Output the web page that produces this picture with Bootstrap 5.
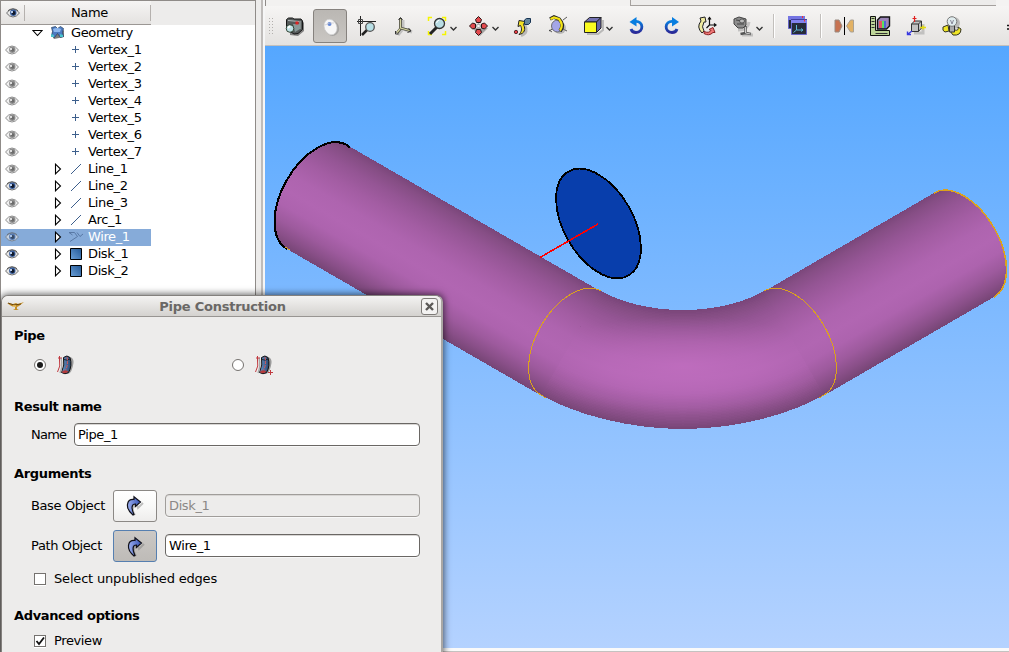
<!DOCTYPE html>
<html lang="en">
<head>
<meta charset="utf-8">
<title>Pipe Construction</title>
<link href="https://cdn.jsdelivr.net/npm/bootstrap@5.3.0/dist/css/bootstrap.min.css" rel="stylesheet">
<style>
body{font-family:"DejaVu Sans",sans-serif;font-size:13px;line-height:17px;letter-spacing:-.38px;color:#000;background:#edeceb;height:652px;width:1009px;overflow:hidden}
svg{display:block;flex:none}
.side{width:256px;height:652px;border:1px solid #8f8b88;border-bottom:0;background:#fff}
.head-row{height:24px;background:#edeceb}
.head-cell{height:24px;background:linear-gradient(#f6f5f4,#e4e2e0);border-bottom:1px solid #9b9794;position:relative}
.head-cell::after{content:"";width:1px;height:16px;background:#b5b1ae;position:absolute;right:0;top:4px}
.tree-row{height:17px;width:150px;padding-bottom:2px}
.tree-row.picked{background:#86abd9;color:#fff}
.split{width:9px;background:#edeceb;border-right:3px solid #f6f6f6;position:relative}
.split::after{content:"";position:absolute;right:-1px;top:0;bottom:0;width:2px;background:#bfbcba}
.tabs-strip{height:6px}
.strip-a{width:365px;background:#f2f1f0;border-left:1px solid #8f8b88}
.strip-b{width:366px;background:#edeceb;border-left:1px solid #a5a19e;border-bottom:1px solid #a5a19e}
.strip-c{background:#f4f3f2}
.tools{height:40px;background:linear-gradient(#f6f5f4,#e4e2e0);border-bottom:1px solid #c4c0bc;padding-left:2px}
.pressed{background:linear-gradient(#bab7b3,#c9c6c2);border:1px solid #86827e;border-radius:3px;width:34px;height:34px}
.scene{height:602px}
.dlg{position:absolute;left:1px;top:295px;width:442px;height:360px;background:#edeceb;border:1px solid #84817e;border-right:2px solid #aaa7a4;border-radius:7px 7px 0 0;box-shadow:0 0 7px 1px rgba(0,0,0,.6)}
.title-bar{height:21px;background:linear-gradient(#f4f3f2,#d4d2cf);border-bottom:1px solid #989592;border-radius:6px 6px 0 0;color:#6a6866;padding:0 3px 0 5px;letter-spacing:-.24px}
.x-btn{width:17px;height:17px;border:1px solid #7d7a77;border-radius:3px;background:#f3f2f1}
.dlg-body{padding:0 21px 0 12px}
.sect{height:20px;line-height:20px;font-weight:bold;letter-spacing:-.35px}
.field{height:23px;border:1px solid #6a6764;border-radius:4px;background:#fff;line-height:21px;padding:0 3px;box-shadow:inset 0 1px 0 #d8d6d4,0 1px 0 #f8f8f8;margin-bottom:1px}
.field.off{background:#edeceb;border-color:#a09d9a;color:#8b8886}
.lbl{width:82px;padding-left:17px;padding-bottom:2px;white-space:nowrap}
.pick{width:44px;height:32px;border:1px solid #8b8885;border-radius:3px;background:linear-gradient(#fff,#f9f9f8 50%,#eeedec)}
.pick.down{background:linear-gradient(#cbc8c5,#bebbb7);border:1px solid #567fb0}
.box{width:12px;height:12px;border:1px solid #75726f;background:#fff;box-shadow:0 1px 0 #fff}
.box+span{margin-left:8px;padding-bottom:2px}
.rad{width:12px;height:12px;border:1px solid #75726f;border-radius:50%;background:#fff}
</style>
</head>
<body class="d-flex position-relative">
<svg width="0" height="0" class="position-absolute"><defs>
<symbol id="eye" viewBox="0 0 14 10"><path d="M.5 5Q3.500 1 7 1T13.500 5Q10.500 9 7 9T.5 5Z" fill="#e6e6e6" stroke="#6f6f6f"/><path d="M2 2.700Q7-1 12 2.700" fill="none" stroke="#555"/><circle cx="7.300" cy="4.800" r="3.200" fill="#3a5f9e"/><circle cx="7.600" cy="5" r="1.900" fill="#101828"/><path d="M5 3h2v2H5z" fill="#b9cdea"/></symbol>
<symbol id="eyeoff" viewBox="0 0 14 10"><path d="M.5 5Q3.500 1 7 1T13.500 5Q10.500 9 7 9T.5 5Z" fill="#f0f0f0" stroke="#909090"/><circle cx="7.300" cy="4.800" r="3.200" fill="#8e8e8e"/><circle cx="7.600" cy="5" r="1.700" fill="#6c6c6c"/><path d="M5 3h2v2H5z" fill="#ddd"/></symbol>
<symbol id="tri" viewBox="0 0 8 12"><path d="M1.500 1.200V10.800L6.500 6Z" fill="#fff" stroke="#000" stroke-width="1.100"/></symbol>
<symbol id="vert" viewBox="0 0 14 14"><path d="M3 6.500h7M6.500 3v7" stroke="#3d5f8c" fill="none" shape-rendering="crispEdges"/></symbol>
<symbol id="lin" viewBox="0 0 14 14"><path d="M2 12L12 2" stroke="#3d5f8c"/></symbol>
<symbol id="wire" viewBox="0 0 14 14"><path d="M0 2.500H5.500L8.500 6.500 1 11.500M0 2.500L3.500 5M8 2.500l3 4L14 4" stroke="#54739f" stroke-width=".9" fill="none"/></symbol>
<linearGradient id="dk" x1="0" y1="1" x2="1" y2="0"><stop offset="0" stop-color="#6ba0d8"/><stop offset="1" stop-color="#215694"/></linearGradient>
<symbol id="disk" viewBox="0 0 14 14"><path d="M1.500 1.500h11v11h-11z" fill="url(#dk)" stroke="#000"/></symbol>
<linearGradient id="pipeIcon"><stop offset="0" stop-color="#6a97cf"/><stop offset="1" stop-color="#27486f"/></linearGradient>
<symbol id="pipe" viewBox="0 0 20 22"><path d="M13 3Q17 4 16.500 9 15 19 11 20H8z" fill="#666" opacity=".6"/><path d="M6.500 3.500Q10 .5 13 3.500 15.500 12 11.500 18.500 8 21 4.500 18.500 8 11 6.500 3.500Z" fill="url(#pipeIcon)" stroke="#111"/><path d="M5.200 17.500Q8 15 11.500 17.500 8.500 20.500 5.200 18.500Z" fill="#b53a3a"/><path d="M6.800 5.500Q10 7 13 5" stroke="#111" fill="none" stroke-width=".8"/><path d="M10 3Q11.500 11 8.500 16" stroke="#d55" fill="none" stroke-dasharray="3 1"/><path d="M4 4Q6 12 3 19" stroke="#aaa" stroke-width="1.400" fill="none"/><path d="M2.500 2v4M1 4h4M2.500 6Q4 12 .5 18" stroke="#c13a40" fill="none"/></symbol>
<linearGradient id="ar" x2="1"><stop offset="0" stop-color="#9cafef"/><stop offset="1" stop-color="#3452b4"/></linearGradient>
<symbol id="arrow" viewBox="0 0 20 22"><path d="M10 20C6 15 8 10 12 10l1 3 5-5" fill="none" stroke="#777" stroke-width="2" opacity=".45"/><path d="M8 20C-.5 13 1.500 4 9 4.500V1.800L15.500 7 10.500 11.500V9C6.500 9 6 13 9 19.500Z" fill="url(#ar)" stroke="#101018" stroke-width="1.200"/></symbol>
<linearGradient id="blu" x2="0" y2="1"><stop offset="0" stop-color="#087ee0"/><stop offset="1" stop-color="#2a2a98"/></linearGradient>
</defs></svg>

<aside class="side">
  <div class="head-row d-flex">
    <div class="head-cell d-flex align-items-center" style="width:24px;padding-left:5px"><svg width="14" height="10"><use href="#eye"/></svg></div>
    <div class="head-cell" style="width:126px;padding:3px 0 0 46px">Name</div>
  </div>
  <div id="tree"></div>
</aside>
<div class="split"></div>

<main class="flex-grow-1">
  <div class="tabs-strip d-flex"><div class="strip-a"></div><div class="strip-b"></div><div class="strip-c flex-grow-1"></div></div>
  <div class="tools d-flex">
    <svg width="10" height="39" viewBox="267 6 10 39"><path d="M269.500 18v17M272.500 18v17" stroke="#b3b0ad" stroke-dasharray="1 2"/></svg>
    <svg width="36" height="39" viewBox="277 6 36 39"><path d="M290 21l12-1 2 3v8l-6 5-8-1z" fill="#555" opacity=".7"/><path d="M286.500 19.500l2-1.500h4l1.500 1h7l1.500 2v8.500l-4.500 4-4 .5-7.500-5z" fill="#555a5a" stroke="#161616"/><path d="M288 20.500l11 1M300 21v8" stroke="#b4bcbc" fill="none"/><path d="M293 24h7v5l-5 3z" fill="#899"/><rect x="295.500" y="21.500" width="3" height="3" fill="#d22"/><circle cx="290" cy="28.500" r="3.800" fill="#bfe2e6" stroke="#343"/><path d="M288 28l2-2" stroke="#fff" stroke-width="2"/></svg>
    <div class="pressed" style="margin-top:3px"><svg width="32" height="32" viewBox="314 10 32 32"><ellipse cx="332" cy="28" rx="7" ry="8" fill="#888" opacity=".5" transform="rotate(-20 332 28)"/><ellipse cx="330.500" cy="27" rx="6.200" ry="8" fill="#f7f7f7" stroke="#ccc" stroke-width=".6" transform="rotate(-22 330.500 27)"/><circle cx="329.500" cy="24" r="2" fill="#6388d8"/><path d="M325 25q5-3 9-2" stroke="#c4c4cc" fill="none" stroke-width=".7"/></svg></div>
    <svg width="37" height="39" viewBox="347 6 37 39"><path d="M360.500 16v20M357 21.500h19" stroke="#222" shape-rendering="crispEdges"/><path d="M358.500 19.500h4v4h-4z" fill="none" stroke="#444"/><path d="M367 30l-5 5" stroke="#222" stroke-width="2.500"/><circle cx="370" cy="27" r="4.300" fill="#b9e0e6" stroke="#555" stroke-width="1.300"/></svg>
    <svg width="37" height="39" viewBox="384 6 37 39"><path d="M403 20v9l9 3M402 30l-4 5" stroke="#999" fill="none" opacity=".5" stroke-width="3"/><path d="M400.500 18v10l9.500 2.500M401 28l-4 5" stroke="#4a4a3c" stroke-width="2.800" fill="none"/><path d="M400.500 19v9l9 2.500M400 29l-3 3.500" stroke="#d5d5a2" stroke-width="1.200" fill="none"/><path d="M398.500 20l2-2.500 2 2.500M395.500 31v3h3M408.500 28l2.500 3-3.500 1.500" stroke="#333" fill="none"/></svg>
    <svg width="40" height="39" viewBox="421 6 40 39"><path d="M432 17.500h-3.500V21M442 17.500h3.500V21M432 34.500h-3.500V31M442 34.500h3.500V31" stroke="#f5f500" stroke-width="1.500" fill="none"/><path d="M437 27l-7 7" stroke="#222" stroke-width="3"/><circle cx="439.500" cy="23.500" r="5" fill="#b9dce4" stroke="#333" stroke-width="1.300"/><path d="M436.500 23q1-3 3-3" stroke="#fff" fill="none"/><path d="M450.500 27l3 3 3-3" stroke="#333" stroke-width="1.400" fill="none"/></svg>
    <svg width="42" height="39" viewBox="461 6 42 39"><path d="M472 28l8 8 8-8z" opacity=".3"/><path d="M478.500 20v12M473 26h11" stroke="#aaa" stroke-width="1.500"/><g fill="#e24a4e" stroke="#281414"><path d="M478.500 16.500l3 3-1 3h-4l-1-3zM478.500 35.500l3-3-1-3h-4l-1 3zM469.500 26l3-3 3 1v4l-3 1zM487.500 26l-3-3-3 1v4l3 1z"/></g><rect x="477" y="24.500" width="3" height="3" fill="#f8f8f8" stroke="#999" stroke-width=".6"/><path d="M492.500 27l3 3 3-3" stroke="#333" stroke-width="1.400" fill="none"/></svg>
    <svg width="37" height="39" viewBox="503 6 37 39"><path d="M521 35.500c6-2 6-6 4-10" stroke="#888" stroke-width="3" fill="none" opacity=".5"/><path d="M519 34.500c3-3 3-6 1.500-9l-2.500 1 1-6 6 1-1.500 3c2.500 5 1 9-4.500 10z" fill="#f2df26" stroke="#222"/><path d="M524.500 20l2-1.500h4v4l-2 2h-4z" fill="#64859d" stroke="#173352"/><circle cx="516" cy="32" r="1.700" fill="#e63a43" stroke="#311" stroke-width=".8"/></svg>
    <svg width="34" height="39" viewBox="540 6 34 39"><path d="M549 30l3 2M563 20l4-3M549 31l5-3M563 29l4 2" stroke="#333" stroke-width=".8"/><ellipse cx="560" cy="28" rx="6" ry="6" fill="#888" opacity=".5"/><circle cx="557.500" cy="26" r="6" fill="#a4a6e8" stroke="#555" stroke-width=".8"/><path d="M550 19l4-2 5 2q6 6 1 12" fill="none" stroke="#222" stroke-width="3.600"/><path d="M550.500 19l3.500-1.500 5 1.500q5 6 1 11.500" fill="none" stroke="#f5e414" stroke-width="2.200"/></svg>
    <svg width="44" height="39" viewBox="574 6 44 39"><path d="M587 34h11l5-4V20" stroke="#999" stroke-width="2" fill="none" opacity=".6"/><path d="M584.500 22l5-4.500h11.500l-4.500 4.500z" fill="#7472b2" stroke="#222"/><path d="M596.500 22l4.500-4.500V28l-4.500 4.500z" fill="#6664a6" stroke="#222"/><path d="M584.500 22h12v10.500h-12z" fill="#fbfb20" stroke="#222"/><path d="M606.500 27l3 3 3-3" stroke="#333" stroke-width="1.400" fill="none"/></svg>
    <svg width="36" height="39" viewBox="618 6 36 39"><path d="M635 21.500c9-1 9 11 1 11q-4 0-5-3.500" fill="none" stroke="url(#blu)" stroke-width="2.800"/><path d="M629.500 22l7-5v9.500z" fill="#087ee0"/></svg>
    <svg width="36" height="39" viewBox="654 6 36 39"><path d="M673 21.500c-9-1-9 11-1 11q4 0 5-3.500" fill="none" stroke="url(#blu)" stroke-width="2.800"/><path d="M679 22l-7-5v9.500z" fill="#087ee0"/></svg>
    <svg width="35" height="39" viewBox="690 6 35 39"><path d="M702 33q-6-6-1-12l-1-3 5-1 1 5-2 0q-3 5 0 9z" fill="#efeaa0" stroke="#222"/><path d="M704 31.500q5 2 7-1l-2-1 4-2 2 5-2 0q-4 4-9 1z" fill="#f07878" stroke="#822"/><path d="M709.500 17v8h7M709.500 25l-3 3M708 19.500l1.500-2 1.500 2M714 23.500l2 1.500-2 1.500" stroke="#111" fill="none" stroke-width="1.200"/></svg>
    <svg width="42" height="39" viewBox="725 6 42 39"><path d="M738 30q10 0 11-8M742 35h11" stroke="#999" stroke-width="3" fill="none" opacity=".5"/><path d="M734 19l5-2 7 2v6l-3 3h-5l-4-4z" fill="#8e8e8e" stroke="#444"/><path d="M736 20l7 1M737 24h7" stroke="#444"/><ellipse cx="742" cy="21" rx="2.500" ry="2" fill="#bbb" stroke="#444" stroke-width=".8"/><path d="M745.500 26v7l5.500 1M745.500 33l-5 1" stroke="#555" stroke-width="2.500" fill="none"/><path d="M745.500 27v6l5 1" stroke="#ccc" fill="none"/><path d="M756.500 27l3 3 3-3" stroke="#333" stroke-width="1.400" fill="none"/></svg>
    <svg width="60" height="39" viewBox="767 6 60 39"><path d="M773.500 14v24M820.500 14v24" stroke="#c2bfbc"/><path d="M774.500 14v24M821.500 14v24" stroke="#fff"/><path d="M788.500 16.500h16v12h-16z" fill="#242a38" stroke="#6464c6"/><path d="M788 16h17v4h-17z" fill="#7474e2"/><path d="M791.500 19.500h15v15h-15z" fill="#262c3a" stroke="#6868cc"/><path d="M791 19h16v4h-16z" fill="#8282ee"/><path d="M791 19.500h16" stroke="#4040a0"/><path d="M804 20.500h1M802 17h1" stroke="#e33" stroke-width="2"/><path d="M796.500 25v5h6M796.500 30l-3 2.500M801 28.500l2 1.500-2 1.500" stroke="#5fb8d8" fill="none"/></svg>
    <svg width="36" height="39" viewBox="827 6 36 39"><path d="M835 20h4l3 6-3 6h-4z" fill="#c77352" stroke="#998a80"/><path d="M853.500 20h-3l-4 6 4 6h3z" fill="#e2b164" stroke="#aaa194"/><path d="M844.500 17v18" stroke="#000" shape-rendering="crispEdges"/></svg>
    <svg width="36" height="39" viewBox="863 6 36 39"><path d="M870.500 16.500h5v14h14v5h-19z" fill="#bdd599" stroke="#111"/><path d="M873 18v1M873 21v1M873 24v1M873 27v1M877 33v1M880 33v1M883 33v1M886 33v1" stroke="#333" stroke-width="3"/><path d="M877.500 20l3-3h9v9l-3 3h-9z" fill="#9b86b8" stroke="#111" stroke-width="1.400"/><path d="M879 21h3v7h-3z" fill="#e35568"/><path d="M882 21h2v7h-2z" fill="#5de05d"/><path d="M884 21h2v7h-2z" fill="#5362d8"/></svg>
    <svg width="36" height="39" viewBox="899 6 36 39"><path d="M914 33h9v-9" stroke="#999" stroke-width="3" fill="none" opacity=".5"/><path d="M911.500 24l3-3h7v7l-3 3.500h-7zM911.500 24h7v7.500M918.500 24l3-3" fill="#c2c2c2" stroke="#333"/><path d="M914.500 16v6M912.500 18.500h4" stroke="#e02020" stroke-width="1.200"/><path d="M920 27.500h6M923 25.500v4" stroke="#e4dc10" stroke-width="1.500"/><path d="M912 31l-4 3M907.500 31.500v3h3.500" stroke="#3838e0" stroke-width="1.400" fill="none"/></svg>
    <svg width="36" height="39" viewBox="935 6 36 39"><ellipse cx="954" cy="23" rx="6" ry="6" fill="#888" opacity=".5"/><path d="M955 30q4 1 3-3l3 2q0 7-8 6l-3-4z" fill="#f0e626" stroke="#332"/><path d="M948 25l-5 2q-1 4 2 5l4-1z" fill="#f0e626" stroke="#332"/><path d="M949.500 25h5v7h-5z" fill="#a9a9a9" stroke="#333"/><circle cx="952" cy="21.500" r="4.800" fill="#e0ecee" stroke="#777"/><path d="M950.500 20l1.500 4 1.500-4" stroke="#889" fill="none"/></svg>
    <svg width="38" height="39" viewBox="971 6 38 39"><path d="M1007 25.500h2M1007 29h2" stroke="#111" stroke-width="1.400"/></svg>
  </div>
  <svg class="scene" id="scene" width="744" height="602" viewBox="265 46 744 602">
    <defs>
      <linearGradient id="sky" x2="0" y2="1"><stop offset="0" stop-color="#55a7ff"/><stop offset="1" stop-color="#b4d2ff"/></linearGradient>
      <linearGradient id="tubeL" gradientUnits="userSpaceOnUse" x1="347" y1="145" x2="287" y2="249"></linearGradient>
      <linearGradient id="tubeR" gradientUnits="userSpaceOnUse" x1="934" y1="193" x2="994" y2="297"></linearGradient>
      <radialGradient id="glow" gradientUnits="userSpaceOnUse" cx="0" cy="0" r="1" gradientTransform="translate(683 366) scale(150 50)"><stop offset="0" stop-color="#c872c6" stop-opacity=".6"/><stop offset=".5" stop-color="#c46fc3" stop-opacity=".38"/><stop offset="1" stop-color="#b868b8" stop-opacity="0"/></radialGradient>
    </defs>
    <rect x="265" y="46" width="744" height="602" fill="url(#sky)"/>
    <g shape-rendering="crispEdges">
      <path d="M347 145A59 34.050 -60 0 0 287 249L541 395.500 601 291.500Z" fill="url(#tubeL)"/>
      <path d="M934 193A59 34.050 60 0 1 994 297L824 395.500 764 291.500Z" fill="url(#tubeR)"/>
      <g id="bend"></g>
      <path d="M601 291C620 302 650 310 683 310S745 302 764 291L824 395C790 414.600 736 429 683 429S575 414.600 541 395Z" fill="url(#glow)"/>
      <path d="M350 148L347 145A59 34.050 -60 0 0 287 249" fill="none" stroke="#000" stroke-width="2"/>
      <path d="M285 247l5 3" stroke="#dca21c"/>
      <path d="M601 291A59 34.050 -60 0 0 541 395L546 398M764 291A59 34.050 60 0 1 824 395L819 398" fill="none" stroke="#dca21c"/>
      <path d="M934 193A59 34.050 60 0 1 994 297" fill="none" stroke="#dca21c" stroke-width="1.500"/>
      <ellipse cx="598.500" cy="223.500" rx="60" ry="34.600" transform="rotate(60 598.500 223.500)" fill="#083eac" stroke="#000" stroke-width="1.800"/>
      <path d="M540 257.500L598 224" stroke="#f00" stroke-width="1.600"/>
    </g>
  </svg>
  <div style="height:4px;background:#fafafa;border-bottom:1px solid #c4c2c0"></div>
</main>

<section class="dlg">
  <div class="title-bar d-flex align-items-center justify-content-between">
    <svg width="17" height="11" viewBox="0 0 17 11"><path d="M0 2l6 1 3-1 2 1 6-2-5 4-2 1v2l2 1H6l2-1V6Q5 6 0 2z" fill="#c58e25"/><path d="M1 2l6 2 7-1" stroke="#6b4710" fill="none"/><path d="M6 5h3" stroke="#ffe490"/></svg>
    <b>Pipe Construction</b>
    <div class="x-btn d-flex align-items-center justify-content-center"><svg width="11" height="11" viewBox="0 0 11 11"><path d="M2 2l7 7M9 2L2 9" stroke="#5b5957" stroke-width="2.400"/></svg></div>
  </div>
  <div class="dlg-body">
    <div class="sect" style="margin-top:9px">Pipe</div>
    <div class="d-flex align-items-center" style="height:20px;margin-top:9px;padding-left:20px">
      <div class="rad d-flex align-items-center justify-content-center"><svg width="6" height="6"><circle cx="3" cy="3" r="3" fill="#1a1a1a"/></svg></div>
      <svg width="20" height="22" style="margin-left:11px"><use href="#pipe"/></svg>
      <div class="rad" style="margin-left:155px"></div>
      <svg width="20" height="22" style="margin-left:11px" overflow="visible"><use href="#pipe"/><path d="M13 18.500h5M15.500 16v5" stroke="#c13a40"/></svg>
    </div>
    <div class="sect" style="margin-top:22px">Result name</div>
    <div class="d-flex align-items-center" style="height:24px;margin-top:6px"><div class="lbl" style="width:60px;letter-spacing:-.75px">Name</div><div class="field flex-grow-1">Pipe_1</div></div>
    <div class="sect" style="margin-top:17px">Arguments</div>
    <div class="d-flex align-items-center" style="height:32px;margin-top:6px"><div class="lbl" style="width:99px">Base Object</div><div class="pick d-flex align-items-center justify-content-center"><svg width="20" height="22"><use href="#arrow"/></svg></div><div class="field off flex-grow-1" style="margin-left:8px">Disk_1</div></div>
    <div class="d-flex align-items-center" style="height:32px;margin-top:8px"><div class="lbl" style="width:99px">Path Object</div><div class="pick down d-flex align-items-center justify-content-center"><svg width="20" height="22" style="margin:1px 0 0 2px"><use href="#arrow"/></svg></div><div class="field flex-grow-1" style="margin-left:8px">Wire_1</div></div>
    <div class="d-flex align-items-center" style="height:20px;margin-top:7px;padding-left:20px"><div class="box"></div><span style="letter-spacing:-.18px">Select unpublished edges</span></div>
    <div class="sect" style="margin-top:17px">Advanced options</div>
    <div class="d-flex align-items-center" style="height:20px;margin-top:5px;padding-left:20px"><div class="box"><svg width="10" height="10"><path d="M1.500 5l2.500 3L9 1.500" fill="none" stroke="#111" stroke-width="1.800"/></svg></div><span>Preview</span></div>
  </div>
</section>

<script src="https://cdn.jsdelivr.net/npm/bootstrap@5.3.0/dist/js/bootstrap.bundle.min.js"></script>
<script>
// Object browser rows: label, icon, visible
const rows=[["Vertex_1","vert",0],["Vertex_2","vert",0],["Vertex_3","vert",0],["Vertex_4","vert",0],["Vertex_5","vert",0],["Vertex_6","vert",0],["Vertex_7","vert",0],["Line_1","lin",0],["Line_2","lin",1],["Line_3","lin",0],["Arc_1","lin",0],["Wire_1","wire",1],["Disk_1","disk",1],["Disk_2","disk",1]];
let html=`<div class="tree-row d-flex align-items-center" style="padding-left:31px"><svg width="11" height="8"><path d="M1 1.500h9L5.500 6.500z" fill="#fff" stroke="#000" stroke-width="1.100"/></svg><svg width="15" height="13" style="margin:0 6px 0 7px" viewBox="0 0 15 13"><path d="M3 3l4 1 5-2 2 3v6l-5 1-5 1-2-3z" fill="#444" opacity=".7"/><path d="M1.500 1.500l4-1 2 2 3-2 3 2-1 4 1 4-3 1-3-4-3 4-3-2 1-4z" fill="#4c7ac0" stroke="#27405f" stroke-width=".7"/><path d="M3 3q4-2 8 0l-1 3H4z" fill="#8db7ee"/><path d="M1 8l3 1v2H1zM10 8l3 1v2h-3z" fill="#48c4cc"/></svg>Geometry</div>`;
for(const [t,ic,on] of rows){
  html+=`<div class="tree-row d-flex align-items-center${t=="Wire_1"?" picked":""}" style="padding-left:4px"><svg width="14" height="10"${t=="Wire_1"?' opacity=".65"':''}><use href="#${on?"eye":"eyeoff"}"/></svg><svg width="8" height="12" style="margin-left:35px">${ic=="vert"?"":'<use href="#tri"/>'}</svg><svg width="14" height="14" style="margin:0 5px 0 7px"><use href="#${ic}"/></svg>${t}</div>`;
}
document.getElementById("tree").innerHTML=html;
// Shading profile across the tube, 0 = upper edge, 1 = lower edge
const prof=[[0,122,70,122],[.06,134,78,133],[.16,148,85,148],[.3,163,93,163],[.45,174,100,175],[.58,177,102,178],[.7,173,99,174],[.82,157,90,157],[.92,137,79,136],[1,118,69,117]];
function shade(t){let i=1;while(i<prof.length-1&&prof[i][0]<t)i++;const a=prof[i-1],b=prof[i],k=(t-a[0])/(b[0]-a[0]);return"rgb("+[1,2,3].map(j=>Math.round(a[j]+(b[j]-a[j])*k)).join()+")"}
const stops=prof.map(p=>`<stop offset="${p[0]}" stop-color="${shade(p[0])}"/>`).join("");
tubeL.innerHTML=stops;tubeR.innerHTML=stops;
const top_=[601,291,620,302,650,310,683,310,716,310,745,302,764,291],bot=[541,395,575,414.6,630,429,683,429,736,429,790,414.6,824,395];
let s="";
for(let n=0;n<80;n++){const t=n/80,p=top_.map((v,i)=>(v+(bot[i]-v)*t).toFixed(2));
 s+=`<path d="M${p[0]} ${p[1]}C${p.slice(2,8).join(" ")}C${p.slice(8).join(" ")}L824 395C790 414.600 736 429 683 429S575 414.600 541 395Z" fill="${shade(t)}"/>`}
bend.innerHTML=s;
</script>
</body>
</html>
